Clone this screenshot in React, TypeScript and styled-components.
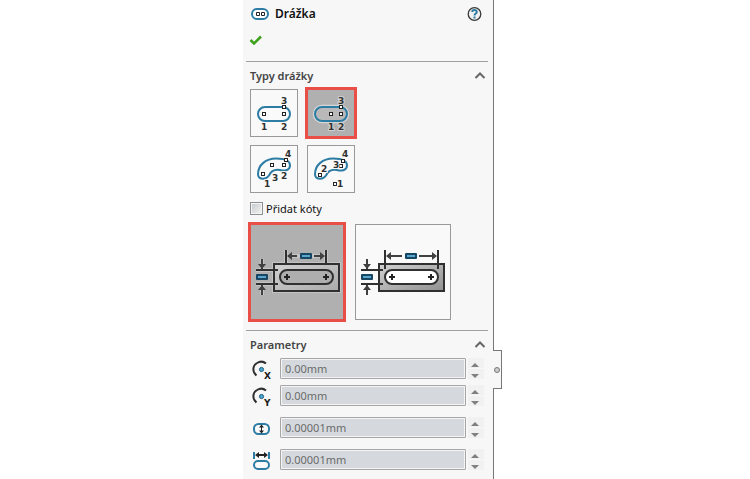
import React, { useState } from "react";
import styled, { createGlobalStyle, css } from "styled-components";

const GlobalStyle = createGlobalStyle`
  * { box-sizing: border-box; }
  body { margin: 0; background: #fff; font-family: "Noto Sans", "Open Sans", sans-serif; color: #222; }
  button, input { font: inherit; color: inherit; }
`;

const Page = styled.div`
  display: grid;
  grid-template-columns: 243fr 251px 256fr;
  min-height: 100vh;
`;

const Panel = styled.aside`
  grid-column: 2;
  position: relative;
  padding: 0 5px 8px 3px;
  background: #f7f7f7;
  border-right: 1px solid #777;
`;

const PanelHeader = styled.header`
  display: flex;
  align-items: center;
  gap: 6px;
  height: 28px;
  padding: 0 6px 0 5px;
`;

const Title = styled.h1`
  flex: 1;
  margin: 0;
  font-size: 12px;
  line-height: 16px;
  font-weight: 600;
  color: #111;
`;

const IconButton = styled.button`
  display: flex;
  padding: 0;
  border: 0;
  background: none;
`;

const Actions = styled.div`
  display: flex;
  height: 33px;
  padding: 6px 3px;
`;

const Section = styled.section`
  border-top: 1px solid #a0a0a0;
`;

const SectionHeader = styled.div`
  display: flex;
  align-items: center;
  justify-content: space-between;
  height: 27px;
  padding: 0 2px 0 4px;
`;

const SectionTitle = styled.h2`
  margin: 0;
  font-size: 11px;
  line-height: 16px;
  font-weight: 600;
  color: #444;
`;

const TypeGrid = styled.div`
  display: grid;
  grid-template-columns: 48px 48px;
  gap: 8px 9px;
  padding-left: 4px;
`;

const OptionRow = styled.div`
  display: grid;
  grid-template-columns: 94px 96px;
  gap: 11px;
  padding: 0 0 10px 4px;
`;

const Option = styled.button<{ $height: number }>`
  display: block;
  height: ${(p) => p.$height}px;
  padding: 0;
  border: 1px solid #999;
  background: #f9f9f9;
  svg { display: block; }
  &[aria-pressed="true"] {
    border-color: #b0b0b0;
    background: #b0b0b0;
    outline: 3px solid #e94f47;
    outline-offset: -1px;
  }
`;

const CheckLabel = styled.label`
  display: flex;
  align-items: center;
  gap: 3px;
  height: 31px;
  padding-left: 4px;
  font-size: 11px;
  color: #111;
`;

const CheckBox = styled.input`
  appearance: none;
  width: 13px;
  height: 13px;
  margin: 0;
  border: 1px solid #8e8f8f;
  background: linear-gradient(135deg, #c4c8cc, #f4f4f4);
  box-shadow: inset 0 0 0 1px #f4f4f4;
  &:checked { background: #2f7da5; }
`;

const Fields = styled.div`
  display: grid;
  row-gap: 11px;
`;

const FieldGroup = styled.div`
  display: grid;
  row-gap: 6px;
`;

const FieldRow = styled.div`
  display: flex;
  align-items: center;
  height: 21px;
  padding: 0 4px 0 4px;
`;

const FieldIcon = styled.label`
  flex: 0 0 30px;
  display: flex;
`;

const ValueInput = styled.input`
  flex: 1;
  min-width: 0;
  height: 21px;
  padding: 0 4px;
  border: 1px solid #a6a6a6;
  border-radius: 1px;
  box-shadow: inset 0 0 0 1px #f4f4f4;
  background: #d5d9dd;
  font-size: 11px;
  line-height: 16px;
  color: #6b6b6b;
`;

const Spinner = styled.div`
  display: grid;
  gap: 1px;
  margin-left: 2px;
`;

const SpinButton = styled.button<{ $down?: boolean }>`
  display: flex;
  align-items: flex-end;
  justify-content: center;
  width: 16px;
  height: 10px;
  padding: 0 2px 1px 0;
  border: 0;
  background: #f1f1f1;
  ${(p) => p.$down && css`svg { transform: rotate(180deg); }`}
`;

const Handle = styled.button`
  position: absolute;
  top: 350px;
  left: 100%;
  display: flex;
  align-items: center;
  justify-content: center;
  width: 9px;
  height: 39px;
  padding: 0;
  border: 1px solid #777;
  border-left: 0;
  background: #f7f7f7;
`;

const HandleDot = styled.span`
  flex: none;
  width: 6px;
  height: 6px;
  border: 1px solid #777;
  border-radius: 50%;
  background: #ccc;
`;

const Digit = styled.text`
  font: 700 9px "DejaVu Sans", sans-serif;
  fill: #303030;
`;

const AxisLetter = styled.text`
  font: 700 9px "DejaVu Sans", sans-serif;
  fill: #202020;
`;

const BLUE = "#2c7ca4";

function Dot({ x, y }: { x: number; y: number }) {
  return <rect x={x - 1.5} y={y - 1.5} width="3" height="3" fill="#fff" stroke="#222" />;
}

type Mark = [string, number, number];
type Kind = "straight" | "center" | "arc3" | "arcCenter";

const drawings: Record<Kind, { label: string; dots: number[][]; marks: Mark[] }> = {
  straight: {
    label: "Přímá drážka",
    dots: [[13, 24], [33, 24], [33, 17]],
    marks: [["1", 10, 40], ["2", 30, 40], ["3", 30, 14]],
  },
  center: {
    label: "Přímá drážka se středem",
    dots: [[23, 24], [33, 24], [33, 17]],
    marks: [["1", 20, 40], ["2", 30, 40], ["3", 30, 14]],
  },
  arc3: {
    label: "Tříbodový oblouk",
    dots: [[12, 28], [21, 19], [33, 19], [35, 14]],
    marks: [["1", 13, 41], ["2", 30, 33], ["3", 21, 35], ["4", 34, 11]],
  },
  arcCenter: {
    label: "Oblouk se středem",
    dots: [[12, 29], [33, 20], [35, 15], [27, 38]],
    marks: [["1", 29, 41], ["2", 13, 26], ["3", 25, 22], ["4", 34, 11]],
  },
};

function SlotDrawing({ kind, active }: { kind: Kind; active: boolean }) {
  const d = drawings[kind];
  const straight = kind === "straight" || kind === "center";
  const outline = straight
    ? "M14 17H32A7 7 0 0 1 32 31H14A7 7 0 0 1 14 17Z"
    : "M7 28C7 19 15 12.5 25 12.5C36 12.5 39 15 39 19.5C39 24 34 25.5 29 24C23 23 20 25 18 29.5C15 34 7 34 7 28Z";
  return (
    <svg width="46" height="46" viewBox="0 0 46 46" aria-hidden="true">
      {active && <path d={outline} fill="none" stroke="#d6d6d6" strokeWidth="4.5" />}
      <path d={outline} fill={active ? "#b9b9b9" : "#fafafa"} stroke={BLUE} strokeWidth="2" />
      {d.dots.map(([x, y]) => <Dot key={`${x}-${y}`} x={x} y={y} />)}
      {d.marks.map(([t, x, y]) => (
        <Digit key={t} x={x} y={y} stroke={active ? "#d2d2d2" : "#fafafa"} strokeWidth="2" paintOrder="stroke">{t}</Digit>
      ))}
    </svg>
  );
}

function Tag({ x, y }: { x: number; y: number }) {
  return (
    <g>
      <rect x={x} y={y} width="12" height="6" rx="1" fill="#174564" />
      <rect x={x + 2} y={y + 2} width="8" height="2" fill="#5ba7c9" />
    </g>
  );
}

function DimensionDrawing({ overall }: { overall: boolean }) {
  const left = overall ? 29 : 35;
  const right = overall ? 82 : 75;
  const end = overall ? 44 : 38;
  const id = overall ? "plateOverall" : "plateCenter";
  return (
    <svg width="92" height="94" viewBox="0 0 92 94" aria-hidden="true">
      <defs>
        <linearGradient id={id} x2="1" y2="1">
          <stop offset="0" stopColor="#d2d2d2" />
          <stop offset="1" stopColor={overall ? "#909090" : "#aaa"} />
        </linearGradient>
      </defs>
      {!overall && (
        <g fill="none" stroke="#c4c4c4" strokeWidth="4">
          <path d={`M${left} 25V39M${right} 25V39M${left} 31H${right}M5 45H28M5 59H28M11 34V44M11 60V70`} />
          <rect x="23" y="39" width="65" height="27" />
        </g>
      )}
      <rect x="23" y="39" width="65" height="27" fill={`url(#${id})`} stroke="#303030" strokeWidth="2" />
      <rect x="29" y="45" width="53" height="14" rx="7" fill={overall ? "#fff" : "#aeaeae"} stroke="#303030" strokeWidth="2" />
      <path d={`M${left} 25V${end}M${right} 25V${end}M5 45H27M5 59H27`} stroke="#303030" strokeWidth="2" />
      <path d={`M${left + 2} 31H46M63 31H${right - 2}M11 34V44M11 60V70`} stroke="#404040" strokeWidth="2" />
      <path d={`M${left + 1} 31L${left + 6} 27V35ZM${right - 1} 31L${right - 6} 27V35ZM11 44L7 39H15ZM11 60L7 65H15Z`} fill="#404040" />
      <Tag x={49} y={28} />
      <Tag x={5} y={49} />
      <path d="M33 52H39M36 49V55M72 52H78M75 49V55" stroke="#222" strokeWidth="2" />
    </svg>
  );
}

function SlotIcon() {
  return (
    <svg width="18" height="12" viewBox="0 0 18 12" aria-hidden="true">
      <rect x="1" y="1" width="16" height="10" rx="5" fill="#fff" stroke={BLUE} strokeWidth="2" />
      <path d="M5.5 4.5h3v3h-3ZM10.5 4.5h3v3h-3Z" fill="#fff" stroke="#222" />
    </svg>
  );
}

function HelpIcon() {
  return (
    <svg width="15" height="15" viewBox="0 0 15 15" aria-hidden="true">
      <circle cx="7.5" cy="7" r="6.3" fill="#f1f1f1" stroke="#383838" strokeWidth="1.3" />
      <path d="M5.2 5C5.3 2.4 9.8 2.4 9.8 4.9C9.8 6.6 7.5 6.4 7.5 8.6" fill="none" stroke={BLUE} strokeWidth="2" />
      <rect x="6.5" y="9.5" width="2" height="2" fill={BLUE} />
    </svg>
  );
}

function CheckIcon() {
  return (
    <svg width="13" height="12" viewBox="0 0 13 12" aria-hidden="true">
      <path d="M1.5 6L5 9.5L12 2.5" fill="none" stroke="#3fa21c" strokeWidth="2.6" />
    </svg>
  );
}

function Chevron() {
  return (
    <svg width="12" height="8" viewBox="0 0 12 8" aria-hidden="true">
      <path d="M1.5 6L6 1.5L10.5 6" fill="none" stroke="#666" strokeWidth="2" />
    </svg>
  );
}

function CoordinateIcon({ axis }: { axis: "X" | "Y" }) {
  return (
    <svg width="22" height="27" viewBox="0 -3 22 27" aria-hidden="true">
      <path d="M6.5 17.5C2 14 2.5 7.5 7 5C10 3.2 13.5 3.4 16 5.5" fill="none" stroke="#303030" strokeWidth="2" />
      <circle cx="11.5" cy="11.5" r="2.1" fill="#49a4cb" stroke="#205f82" />
      <AxisLetter x="14" y="21">{axis}</AxisLetter>
    </svg>
  );
}

function WidthIcon() {
  return (
    <svg width="22" height="21" viewBox="0 0 22 21" aria-hidden="true">
      <rect x="4" y="7" width="15" height="10" rx="4.5" fill="#fafafa" stroke={BLUE} strokeWidth="2" />
      <path d="M11.5 9V15" stroke="#222" />
      <path d="M11.5 7.5L14 10.5H9ZM11.5 16.5L14 13.5H9Z" fill="#222" />
    </svg>
  );
}

function LengthIcon() {
  return (
    <svg width="22" height="21" viewBox="0 0 22 21" aria-hidden="true">
      <rect x="4" y="12" width="15" height="8" rx="4" fill="#fafafa" stroke={BLUE} strokeWidth="2" />
      <path d="M4 3V10M19 3V10" stroke={BLUE} strokeWidth="2" />
      <path d="M7 6H16" stroke="#222" strokeWidth="2" />
      <path d="M5 6L9 3V9ZM18 6L14 3V9Z" fill="#222" />
    </svg>
  );
}

function Arrow() {
  return (
    <svg width="8" height="4" viewBox="0 0 8 4" aria-hidden="true">
      <path d="M4 0L8 4H0Z" fill="#808080" />
    </svg>
  );
}

interface FieldProps {
  id: string;
  label: string;
  icon: React.ReactNode;
  initial: number;
  digits: number;
}

function Field({ id, label, icon, initial, digits }: FieldProps) {
  const [value, setValue] = useState(`${initial.toFixed(digits)}mm`);
  const step = (direction: number) =>
    setValue((v) => `${((parseFloat(v) || 0) + direction * 10 ** -digits).toFixed(digits)}mm`);
  return (
    <FieldRow>
      <FieldIcon htmlFor={id} aria-label={label}>{icon}</FieldIcon>
      <ValueInput id={id} aria-label={label} value={value} onChange={(e) => setValue(e.target.value)} />
      <Spinner>
        <SpinButton type="button" aria-label={`${label}: zvýšit`} onClick={() => step(1)}><Arrow /></SpinButton>
        <SpinButton type="button" $down aria-label={`${label}: snížit`} onClick={() => step(-1)}><Arrow /></SpinButton>
      </Spinner>
    </FieldRow>
  );
}

function CollapsibleSection({ title, children }: { title: string; children: React.ReactNode }) {
  const [open, setOpen] = useState(true);
  return (
    <Section>
      <SectionHeader>
        <SectionTitle>{title}</SectionTitle>
        <IconButton type="button" aria-label={title} aria-expanded={open} onClick={() => setOpen(!open)}>
          <Chevron />
        </IconButton>
      </SectionHeader>
      {open && children}
    </Section>
  );
}

export default function App() {
  const [kind, setKind] = useState<Kind>("center");
  const [overall, setOverall] = useState(false);
  return (
    <Page>
      <GlobalStyle />
      <Panel>
        <PanelHeader>
          <SlotIcon />
          <Title>Drážka</Title>
          <IconButton type="button" aria-label="Nápověda"><HelpIcon /></IconButton>
        </PanelHeader>
        <Actions>
          <IconButton type="button" aria-label="OK"><CheckIcon /></IconButton>
        </Actions>
        <CollapsibleSection title="Typy drážky">
          <TypeGrid>
            {(Object.keys(drawings) as Kind[]).map((k) => (
              <Option key={k} type="button" $height={48} aria-label={drawings[k].label} aria-pressed={kind === k} onClick={() => setKind(k)}>
                <SlotDrawing kind={k} active={kind === k} />
              </Option>
            ))}
          </TypeGrid>
          <CheckLabel>
            <CheckBox type="checkbox" />
            Přidat kóty
          </CheckLabel>
          <OptionRow>
            <Option type="button" $height={96} aria-label="Vzdálenost středů" aria-pressed={!overall} onClick={() => setOverall(false)}>
              <DimensionDrawing overall={false} />
            </Option>
            <Option type="button" $height={96} aria-label="Celková délka" aria-pressed={overall} onClick={() => setOverall(true)}>
              <DimensionDrawing overall />
            </Option>
          </OptionRow>
        </CollapsibleSection>
        <CollapsibleSection title="Parametry">
          <Fields>
            <FieldGroup>
              <Field id="x" label="Souřadnice X" icon={<CoordinateIcon axis="X" />} initial={0} digits={2} />
              <Field id="y" label="Souřadnice Y" icon={<CoordinateIcon axis="Y" />} initial={0} digits={2} />
            </FieldGroup>
            <Field id="width" label="Šířka drážky" icon={<WidthIcon />} initial={0.00001} digits={5} />
            <Field id="length" label="Délka drážky" icon={<LengthIcon />} initial={0.00001} digits={5} />
          </Fields>
        </CollapsibleSection>
        <Handle type="button" aria-label="Skrýt panel"><HandleDot /></Handle>
      </Panel>
    </Page>
  );
}
